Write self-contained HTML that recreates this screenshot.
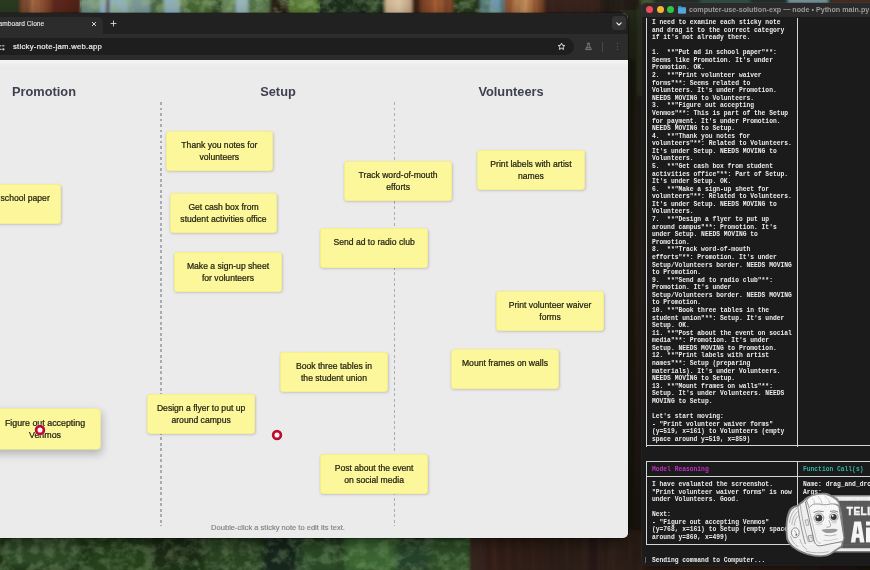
<!DOCTYPE html>
<html>
<head>
<meta charset="utf-8">
<title>Jamboard Clone</title>
<style>
*{box-sizing:border-box;margin:0;padding:0}
html,body{width:870px;height:570px;overflow:hidden}
body{position:relative;font-family:"Liberation Sans",sans-serif;background:#1f2a18}
.abs{position:absolute}
.ic{position:absolute;display:block;overflow:visible}
/* ---------- forest background ---------- */
#bg{position:absolute;left:0;top:0;width:870px;height:570px;overflow:hidden;background:#20301a}
#bg div{position:absolute}
/* ---------- browser ---------- */
#browser{position:absolute;border-radius:5.5px;overflow:hidden;background:#ebebeb;box-shadow:0 5px 16px rgba(0,0,0,.5),0 0 0 0.5px rgba(0,0,0,.5)}
#tabbar{position:absolute;left:0;top:0;width:100%;background:#212121}
#tab{position:absolute;left:0;top:3.6px;width:183.1px;bottom:0;background:#2c2c2c;border-radius:4.5px 4.5px 0 0}
.tabtxt{position:absolute;-webkit-text-stroke:.12px #e2e2e2;left:60px;top:5.8px;width:64.3px;text-align:right;font-size:6.6px;line-height:10px;color:#e2e2e2;white-space:nowrap;letter-spacing:.05px}
#ddbtn{position:absolute;width:14px;height:14px;border-radius:3.5px;background:#333}
#toolbar{position:absolute;left:0;width:100%;background:#2c2c2c}
#url{position:absolute;left:0;background:#1e1e1e;border-radius:8.6px}
.urltxt{position:absolute;-webkit-text-stroke:.2px #ededed;font-size:7.7px;line-height:10px;color:#ededed;white-space:nowrap;letter-spacing:.27px}
.dot{width:1.4px;height:1.4px;border-radius:50%;background:#6f6f6f}
#page{position:absolute;left:0;width:100%;background:linear-gradient(#f4f4f4 0,#ebebeb 7px)}
h2{position:absolute;width:120px;text-align:center;font-size:12.8px;line-height:16px;font-weight:bold;color:#3e4050}
.dash{position:absolute;width:1.1px;background:repeating-linear-gradient(to bottom,#aaaab3 0,#aaaab3 2.7px,transparent 2.7px,transparent 5.5px)}
.note{position:absolute;width:108px;height:39.7px;-webkit-text-stroke:0.22px #1d1d10;background:#fcf79b;border-radius:4px;box-shadow:inset 0 0 0 .6px #efe77f,0.3px 1px 2.5px rgba(0,0,0,.17);padding:7.6px 2px 0;text-align:center;font-size:8.6px;line-height:12.4px;color:#1d1d10;white-space:nowrap}
.note.drag{transform:scale(1.03);box-shadow:inset 0 0 0 .6px #efe77f,1px 4px 8px rgba(0,0,0,.24)}
#hint{position:absolute;width:200px;text-align:center;font-size:7.55px;line-height:10px;color:#808080;-webkit-text-stroke:.15px #808080}
.ring{position:absolute;width:10.8px;height:10.8px;border-radius:50%;border:3.1px solid #bb0b2b;background:#fff3f3;box-shadow:0 0 0 .7px rgba(255,255,255,.75)}
/* ---------- terminal ---------- */
#term{position:absolute;border-radius:5px;background:#1b1b1b;overflow:hidden;box-shadow:0 4px 14px rgba(0,0,0,.55),0 0 0 0.5px rgba(90,90,90,.6)}
#ttitle{position:absolute;left:0;top:0;width:100%;height:13.6px;background:#2a2a2a}
.tl{position:absolute;top:3.1px;width:7.2px;height:7.2px;border-radius:50%}
.ttxt{position:absolute;top:1.8px;font-size:7.17px;line-height:10px;font-weight:bold;color:#9b9b9b;white-space:nowrap}
pre{position:absolute;font-family:"Liberation Mono",monospace;font-weight:bold;font-size:6.3px;line-height:7.577px;color:#ececec;white-space:pre}
.ln{position:absolute}
.note,h2,#hint,pre,.tabtxt,.urltxt,.ttxt{will-change:transform}

#browser{left:-80.0px;top:13.0px;width:708.0px;height:524.5px}
#tabbar{height:21.2px}
#toolbar{top:21.2px;height:25.9px}
#page{top:46.599999999999994px;height:477.9px}
#term{left:642.4px;top:3.0px;width:237.60000000000002px;height:562.3px}
</style>
</head>
<body>
<div id="bg">
<svg class="ic" style="left:0;top:0" width="870" height="570" viewBox="0 0 870 570">
  <defs>
    <filter id="fz" x="-5%" y="-5%" width="110%" height="110%"><feGaussianBlur stdDeviation="1.6"/></filter>
    <filter id="fz2" x="-5%" y="-20%" width="110%" height="140%"><feGaussianBlur stdDeviation="3"/></filter>
    <linearGradient id="tr1" x1="0" x2="1"><stop offset="0" stop-color="#6e3e28"/><stop offset=".22" stop-color="#a86a44"/><stop offset=".42" stop-color="#8a4a2e"/><stop offset=".55" stop-color="#62291b"/><stop offset="1" stop-color="#4e2016"/></linearGradient>
    <linearGradient id="tr2" x1="0" x2="1"><stop offset="0" stop-color="#c9b08c"/><stop offset=".5" stop-color="#dcc6a4"/><stop offset="1" stop-color="#b89a78"/></linearGradient>
    <linearGradient id="tr3" x1="0" x2="1"><stop offset="0" stop-color="#7a3e22"/><stop offset=".5" stop-color="#a86036"/><stop offset="1" stop-color="#7a4024"/></linearGradient>
    <linearGradient id="tr4" x1="0" x2="1"><stop offset="0" stop-color="#8a4a28"/><stop offset=".45" stop-color="#cf9a62"/><stop offset=".75" stop-color="#a05c34"/><stop offset="1" stop-color="#4a2a1a"/></linearGradient>
    <linearGradient id="bt" x1="0" x2="1"><stop offset="0" stop-color="#33201a"/><stop offset=".3" stop-color="#281914"/><stop offset=".6" stop-color="#34221a"/><stop offset="1" stop-color="#1c1410"/></linearGradient>
    <linearGradient id="vs" x1="0" x2="0" y1="0" y2="1"><stop offset="0" stop-color="#252c1b"/><stop offset=".12" stop-color="#221f16"/><stop offset=".5" stop-color="#2e2119"/><stop offset="1" stop-color="#1c1511"/></linearGradient>
  <filter id="leaf" x="0" y="0" width="100%" height="100%"><feTurbulence type="fractalNoise" baseFrequency="0.09 0.11" numOctaves="3" seed="7"/><feColorMatrix values="0 0 0 0 0.30  0 0 0 0 0.46  0 0 0 0 0.22  2.4 2.4 0 0 -2.1"/></filter>
    <filter id="bark" x="0" y="0" width="100%" height="100%"><feTurbulence type="fractalNoise" baseFrequency="0.16 0.012" numOctaves="2" seed="3"/><feColorMatrix values="0 0 0 0 0.05  0 0 0 0 0.03  0 0 0 0 0.02  2.2 0 0 0 -0.8"/></filter>
  </defs>
  <rect width="870" height="570" fill="#22301c"/>
  <!-- top strip -->
  <g filter="url(#fz)">
    <rect x="-5" y="-5" width="26" height="26" fill="#2a3a24"/>
    <rect x="20" y="-5" width="62" height="26" fill="url(#tr1)"/>
    <rect x="81" y="-5" width="22" height="26" fill="#6f8f86"/>
    <rect x="100" y="-5" width="62" height="26" fill="#92b3c6"/>
    <rect x="106" y="-5" width="3.500" height="26" fill="#5a5040"/>
    <rect x="128" y="-5" width="22" height="26" fill="#7a9a9a"/>
    <rect x="150" y="-5" width="14" height="26" fill="#4f6a44"/>
    <rect x="164" y="-5" width="18" height="26" fill="#8fb0c0"/>
    <rect x="180" y="-5" width="34" height="26" fill="#4a6836"/>
    <rect x="212" y="-5" width="12" height="26" fill="#32482a"/>
    <rect x="222" y="-5" width="24" height="26" fill="#6a8a5a"/>
    <rect x="236" y="-5" width="14" height="26" fill="#9ab6c4"/>
    <rect x="248" y="-5" width="24" height="26" fill="#55754a"/>
    <rect x="270" y="-5" width="20" height="26" fill="#2c2218"/>
    <rect x="289" y="-5" width="32" height="26" fill="#587a30"/>
    <rect x="318" y="-5" width="68" height="26" fill="#1f2f1b"/>
    <rect x="368" y="-5" width="10" height="26" fill="#33482c"/>
    <rect x="385" y="-5" width="28" height="26" fill="url(#tr2)"/>
    <rect x="412" y="-5" width="9" height="26" fill="#3a2418"/>
    <rect x="420" y="-5" width="34" height="26" fill="url(#tr3)"/>
    <rect x="453" y="-5" width="30" height="26" fill="#27381f"/>
    <rect x="480" y="-5" width="26" height="26" fill="#557a78"/>
    <rect x="490" y="-5" width="10" height="26" fill="#7298b0"/>
    <rect x="505" y="-5" width="42" height="26" fill="url(#tr4)"/>
    <rect x="545" y="-5" width="56" height="26" fill="#38241a"/>
    <rect x="600" y="-5" width="45" height="26" fill="#231a14"/>
    <rect x="640" y="-5" width="240" height="12" fill="#25332a"/>
    <rect x="641" y="-5" width="12" height="10" fill="#4a5a30"/>
    <rect x="700" y="-5" width="50" height="10" fill="#33524c"/>
    <rect x="788" y="-5" width="40" height="10" fill="#7d9aa4"/>
    <rect x="832" y="-5" width="45" height="10" fill="#4a3024"/>
  </g>
  <!-- strip between windows -->
  <rect x="620" y="10" width="30" height="560" fill="url(#vs)"/>
  <rect x="626" y="60" width="9" height="510" fill="#17120e" opacity=".75" filter="url(#fz)"/>
  <rect x="637" y="6" width="6" height="90" fill="#39452a" opacity=".6" filter="url(#fz)"/>
  <!-- bottom strip -->
  <g filter="url(#fz2)">
    <rect x="-10" y="528" width="490" height="52" fill="#1f3019"/>
    <rect x="5" y="536" width="75" height="30" fill="#2f4a25"/>
    <rect x="90" y="542" width="60" height="40" fill="#27401f"/>
    <rect x="150" y="534" width="50" height="30" fill="#1a2a16"/>
    <rect x="205" y="538" width="55" height="40" fill="#294322"/>
    <rect x="262" y="534" width="45" height="40" fill="#18261a"/>
    <rect x="300" y="542" width="40" height="30" fill="#2c4a28"/>
    <rect x="345" y="536" width="50" height="36" fill="#3a6530"/>
    <rect x="395" y="542" width="40" height="30" fill="#27432a"/>
    <rect x="430" y="536" width="42" height="40" fill="#2e4e28"/>
  </g>
  <rect x="0" y="534" width="474" height="36" filter="url(#leaf)" opacity=".3"/>
  <rect x="80" y="0" width="240" height="14" filter="url(#leaf)" opacity=".5"/>
  <rect x="318" y="0" width="68" height="14" filter="url(#leaf)" opacity=".35"/>
  <rect x="453" y="0" width="52" height="14" filter="url(#leaf)" opacity=".4"/>
  <rect x="470" y="530" width="410" height="45" fill="url(#bt)" filter="url(#fz)"/>
  <rect x="470" y="534" width="175" height="36" filter="url(#bark)" opacity=".35"/>
  <rect x="20" y="0" width="62" height="14" filter="url(#bark)" opacity=".3"/>
  <rect x="420" y="0" width="34" height="14" filter="url(#bark)" opacity=".3"/>
  <rect x="505" y="0" width="140" height="14" filter="url(#bark)" opacity=".3"/>
</svg>

</div>

<div id="browser">
  <div id="tabbar">
    <div id="tab"></div>
    <div class="tabtxt">Jamboard Clone</div>
    <svg class="ic" style="left:171.1px;top:7.5px" width="6" height="6" viewBox="0 0 6 6"><path d="M1 1L5 5M5 1L1 5" stroke="#e6e6e6" stroke-width="0.9" fill="none"/></svg>
    <svg class="ic" style="left:189.9px;top:7.0px" width="7" height="7" viewBox="0 0 7 7"><path d="M3.5 0.6V6.4M0.6 3.5H6.4" stroke="#d8d8d8" stroke-width="0.9" fill="none"/></svg>
    <div id="ddbtn" style="left:691.6px;top:3.3999999999999986px"></div>
    <svg class="ic" style="left:695.6px;top:8.600000000000001px" width="6" height="4" viewBox="0 0 6 4"><path d="M0.8 0.8L3 3L5.2 0.8" stroke="#f0f0f0" stroke-width="1.1" fill="none" stroke-linecap="round" stroke-linejoin="round"/></svg>
  </div>
  <div id="toolbar">
    <div id="url" style="width:653.9px;top:3.900000000000002px;height:17.299999999999997px"></div>
    <svg class="ic" style="left:80.0px;top:9.400000000000002px" width="6" height="7" viewBox="0 0 6 7"><g fill="#d4d4d4"><rect x="0" y="1.300" width="1.300" height="1"/><rect x="2.100" y="1.300" width="2.400" height="1"/><rect x="0" y="4.800" width="1.700" height="1"/><circle cx="3.400" cy="5.300" r="1.150"/></g></svg>
    <div class="urltxt" style="left:92.6px;top:7.900000000000002px">sticky-note-jam.web.app</div>
    <svg class="ic" style="left:636.5px;top:8.099999999999998px" width="9" height="9" viewBox="0 0 24 24"><path d="M12 3.2l2.7 5.6 6.1.8-4.5 4.2 1.1 6-5.4-3-5.4 3 1.1-6L3.2 9.600l6.100-.8z" stroke="#e4e4e4" stroke-width="2.6" fill="none" stroke-linejoin="round"/></svg>
    <svg class="ic" style="left:663.8px;top:7.900000000000002px" width="9" height="9" viewBox="0 0 18 18"><path d="M6.500 2.5H11.500M7.500 2.500V7L3.200 15.200H14.800L10.500 7V2.500M5.200 11.500H12.800" stroke="#8d8d8d" stroke-width="1.6" fill="none" stroke-linejoin="round"/></svg>
    <div class="abs" style="left:682.3px;top:8.000000000000004px;width:0.8px;height:9.4px;background:#484848"></div>
    <div class="abs dot" style="left:696.9px;top:8.899999999999995px"></div>
    <div class="abs dot" style="left:696.9px;top:11.899999999999995px"></div>
    <div class="abs dot" style="left:696.9px;top:14.899999999999995px"></div>
  </div>
  <div id="page">
    <h2 style="left:64.4px;top:24.0px">Promotion</h2>
    <h2 style="left:298.0px;top:24.0px">Setup</h2>
    <h2 style="left:531.3px;top:24.0px">Volunteers</h2>
    <div class="dash" style="left:240.45px;top:42.8px;height:424.1px"></div>
    <div class="dash" style="left:474.05px;top:42.8px;height:424.1px"></div>
    <div class="note" style="left:245.8px;top:71.2px;width:106.7px">Thank you notes for<br>volunteers</div>
    <div class="note" style="left:249.8px;top:133.9px;width:107.0px">Get cash box from<br>student activities office</div>
    <div class="note" style="left:254.2px;top:192.2px;width:108.0px">Make a sign-up sheet<br>for volunteers</div>
    <div class="note" style="left:424.2px;top:101.9px;width:108.2px">Track word-of-mouth<br>efforts</div>
    <div class="note" style="left:400.2px;top:168.7px;width:108.2px">Send ad to radio club</div>
    <div class="note" style="left:556.6px;top:90.1px;width:107.9px">Print labels with artist<br>names</div>
    <div class="note" style="left:576.2px;top:231.2px;width:108.0px">Print volunteer waiver<br>forms</div>
    <div class="note" style="left:530.6px;top:289.2px;width:107.9px">Mount frames on walls</div>
    <div class="note" style="left:226.6px;top:334.6px;width:108.2px">Design a flyer to put up<br>around campus</div>
    <div class="note" style="left:359.6px;top:292.2px;width:107.9px">Book three tables in<br>the student union</div>
    <div class="note" style="left:399.6px;top:394.6px;width:108.2px">Post about the event<br>on social media</div>
    <div class="note" style="left:33.1px;top:124.7px;width:108.0px">Put ad in school paper</div>
    <div class="note drag" style="left:71.3px;top:349.7px">Figure out accepting<br>Venmos</div>
    <svg class="ic" style="left:113.2px;top:363.0px" width="14" height="14" viewBox="0 0 14 14"><circle cx="7" cy="7" r="5.700" fill="rgba(255,255,255,.6)"/><circle cx="7" cy="7" r="3.900" fill="#fff1f1" stroke="#b90b2b" stroke-width="2.700"/></svg>
    <svg class="ic" style="left:349.8px;top:368.5px" width="14" height="14" viewBox="0 0 14 14"><circle cx="7" cy="7" r="5.700" fill="rgba(255,255,255,.6)"/><circle cx="7" cy="7" r="3.900" fill="#fff1f1" stroke="#b90b2b" stroke-width="2.700"/></svg>
    <div id="hint" style="left:258.0px;top:463.0px">Double-click a sticky note to edit its text.</div>
  </div>
</div>

<div id="term">
  <div id="ttitle">
    <div class="tl" style="left:3.5px;background:#ed4a5a"></div>
    <div class="tl" style="left:14.200000000000045px;background:#f3b533"></div>
    <div class="tl" style="left:24.899999999999977px;background:#2dc840"></div>
    <svg class="ic" style="left:36.0px;top:2.9000000000000004px" width="8" height="7.400" viewBox="0 0 8 7.400"><path d="M0 0.800Q0 0 0.800 0H3L3.800 0.900H7.200Q8 0.900 8 1.700V6.600Q8 7.400 7.200 7.400H0.800Q0 7.400 0 6.600Z" fill="#3d8cc4"/><path d="M0 2.300H8V6.600Q8 7.400 7.200 7.400H0.800Q0 7.400 0 6.600Z" fill="#55a7dc"/></svg>
    <div class="ttxt" style="left:46.80000000000007px">computer-use-solution-exp — node • Python main.py</div>
  </div>
  <pre style="left:9.8px;top:16.31px">I need to examine each sticky note
and drag it to the correct category
if it's not already there.

1.  **"Put ad in school paper"**:
Seems like Promotion. It's under
Promotion. OK.
2.  **"Print volunteer waiver
forms"**: Seems related to
Volunteers. It's under Promotion.
NEEDS MOVING to Volunteers.
3.  **"Figure out accepting
Venmos"**: This is part of the Setup
for payment. It's under Promotion.
NEEDS MOVING to Setup.
4.  **"Thank you notes for
volunteers"**: Related to Volunteers.
It's under Setup. NEEDS MOVING to
Volunteers.
5.  **"Get cash box from student
activities office"**: Part of Setup.
It's under Setup. OK.
6.  **"Make a sign-up sheet for
volunteers"**: Related to Volunteers.
It's under Setup. NEEDS MOVING to
Volunteers.
7.  **"Design a flyer to put up
around campus"**: Promotion. It's
under Setup. NEEDS MOVING to
Promotion.
8.  **"Track word-of-mouth
efforts"**: Promotion. It's under
Setup/Volunteers border. NEEDS MOVING
to Promotion.
9.  **"Send ad to radio club"**:
Promotion. It's under
Setup/Volunteers border. NEEDS MOVING
to Promotion.
10. **"Book three tables in the
student union"**: Setup. It's under
Setup. OK.
11. **"Post about the event on social
media"**: Promotion. It's under
Setup. NEEDS MOVING to Promotion.
12. **"Print labels with artist
names"**: Setup (preparing
materials). It's under Volunteers.
NEEDS MOVING to Setup.
13. **"Mount frames on walls"**:
Setup. It's under Volunteers. NEEDS
MOVING to Setup.

Let's start moving:
- "Print volunteer waiver forms"
(y=519, x=161) to Volunteers (empty
space around y=519, x=859)</pre>
  <pre style="left:9.8px;top:463.11px;color:#c22fc4">Model Reasoning</pre>
  <pre style="left:160.8px;top:463.11px;color:#2fb5a4">Function Call(s)</pre>
  <pre style="left:9.8px;top:478.21px">I have evaluated the screenshot.
"Print volunteer waiver forms" is now
under Volunteers. Good.

Next:
- "Figure out accepting Venmos"
(y=768, x=161) to Setup (empty space
around y=860, x=499)</pre>
  <pre style="left:160.8px;top:478.21px">Name: drag_and_drop
Args:
  destination_y: 860
  destination_x: 499
  x: 161
  y: 768</pre>
  <pre style="left:9.8px;top:554.01px">Sending command to Computer...</pre>
  <div class="ln" style="left:3.6px;top:14.5px;width:0.9px;height:429.2px;background:#d6d6d6"></div>
  <div class="ln" style="left:154.6px;top:14.5px;width:0.9px;height:429.2px;background:#d6d6d6"></div>
  <div class="ln" style="left:3.6px;top:442.3px;width:240.0px;height:0.9px;background:#d6d6d6"></div>
  <div class="ln" style="left:3.6px;top:458.3px;width:240.0px;height:0.9px;background:#d6d6d6"></div>
  <div class="ln" style="left:3.6px;top:473.4px;width:240.0px;height:0.9px;background:#d6d6d6"></div>
  <div class="ln" style="left:3.6px;top:541.1px;width:240.0px;height:0.9px;background:#d6d6d6"></div>
  <div class="ln" style="left:3.6px;top:458.3px;width:0.9px;height:83.6px;background:#d6d6d6"></div>
  <div class="ln" style="left:154.6px;top:458.3px;width:0.9px;height:83.6px;background:#d6d6d6"></div>
  <div class="ln" style="left:2.9px;top:553.5px;width:0.8px;height:6.4px;background:#666"></div>
</div>
<svg id="logo" class="ic" style="left:780px;top:488px;opacity:.96" width="90" height="72" viewBox="780 488 90 72">
  <!-- banner -->
  <path d="M832 495H872V552.500H829Z" fill="#858585"/>
  <path d="M834 496.500H872V551.100H830Z" fill="#f4f4f4"/>
  <path d="M834 500.700H872V548.300H830Z" fill="#5c5c5c"/>
  <g transform="translate(0,0.7)">
  <!-- head outline -->
  <path d="M785.600 526C785.800 519 787 512.500 789.500 508.500C791.500 505.500 794.500 504.800 797.200 504.200C799.500 502.500 801 501 802.800 499.800C804.500 498 806 496.800 807.500 495.900C812 493.500 817 492.400 821 492.200C824 491.800 827 491.900 830 493.500C833 495 836 496.500 838.500 498.500L842 512L844.500 536L842.500 546L834 551.500C831.500 554 828 555.600 824 555.900C820 556.300 816 556.300 812 555.300C808 554.700 805 553.600 802 552.300C798 550.500 794.500 548.500 791.500 546C789 543.500 787 541 786.200 538C785.700 534 785.500 530 785.600 526Z" fill="#868686"/>
  <path d="M787.400 526C787.600 519.500 788.700 514 791 510.200C792.800 507.400 795.500 506.600 798 506C800.300 504.400 801.800 502.800 803.800 501.300C805.500 499.600 807 498.500 808.500 497.600C812.500 495.300 817 494.200 821 494C824 493.700 826.500 493.800 829.300 495.200C832 496.500 834.800 498 837 499.800L840.300 512.500L842.700 536L841 545L833 550.200C830.500 552.500 827.500 554 824 554.200C820 554.600 816.500 554.600 812.500 553.700C808.500 553 805.500 552 802.800 550.800C799 549 795.500 547.200 792.800 544.800C790.500 542.500 788.800 540.200 788 537.500C787.500 534 787.300 530 787.400 526Z" fill="#f7f7f7"/>
  <!-- back-of-head hair strands -->
  <g stroke="#a9a9a9" stroke-width=".75" fill="none">
    <path d="M797 507.500C793 510 790.500 515 789.500 522"/>
    <path d="M798 510.500C794.500 513.500 792.500 518 791.800 524"/>
    <path d="M798.800 514.500C796 517 794.600 520.500 794.200 525"/>
    <path d="M790.500 535.500C791.500 540 794 543.500 798 546"/>
    <path d="M800 538.500C801 543 803.500 546.500 807 549"/>
    <path d="M806 550.500Q816 553.500 829 551"/>
  </g>
  <!-- strap -->
  <path d="M797.800 505.500C799 516 801.500 530 805.400 543.500" stroke="#8e8e8e" stroke-width=".9" fill="none"/>
  <path d="M800.300 504.500C801.500 515 804.500 529 808.500 541.500" stroke="#a2a2a2" stroke-width=".8" fill="none"/>
  <!-- face plate -->
  <path d="M805.400 501.300C812 498 826 498 838.800 505.500L843.900 537C844 539.500 842.500 541 841.300 541L821.200 545C817.500 545.600 815.500 544 814.300 541Z" fill="#fcfcfc" stroke="#858585" stroke-width="1"/>
  <path d="M808.700 507L816.500 539.500C817.300 541.800 818.800 542.600 821 542.300" stroke="#b4b4b4" stroke-width=".7" fill="none"/>
  <!-- hair -->
  <path d="M806.600 500C808 497 810.500 495.500 813.500 494.800C817 493.600 820.500 493.400 823.700 493.600C828 494 832 496 835 498.500C837.500 500.500 839 502.500 839.500 504.400C836.500 503.300 833.500 503 830.500 503.300C827.500 504 825 504.200 822.500 504C819.500 503.200 816.500 503 813.500 503.600C811.500 504.400 810 505.800 809.200 507Z" fill="#ffffff" stroke="#8e8e8e" stroke-width=".85"/>
  <path d="M812 497.500Q815 500 814.500 503.300M818 495.500Q821.500 499 822.300 503.800M825 495.500Q829 499 830.800 503.200" stroke="#b2b2b2" stroke-width=".65" fill="none"/>
  <!-- eyes -->
  <ellipse cx="818.900" cy="517.300" rx="4.900" ry="5" fill="#fff" stroke="#8e8e8e" stroke-width=".8"/>
  <circle cx="818.800" cy="517.400" r="3.500" fill="#3a3a3a"/>
  <circle cx="817.600" cy="516.100" r="1.100" fill="#fff"/>
  <ellipse cx="833.800" cy="516.100" rx="4.200" ry="4.400" fill="#fff" stroke="#8e8e8e" stroke-width=".8"/>
  <circle cx="833.700" cy="516.200" r="3" fill="#3a3a3a"/>
  <circle cx="832.700" cy="515.100" r="1" fill="#fff"/>
  <path d="M813.500 511.800Q818.500 509.300 823.800 511M830 510.800Q834 509.200 838 511.300" stroke="#808080" stroke-width=".9" fill="none"/>
  <path d="M815.500 523.500Q819 525 822.500 523.300M831.300 522Q834.300 523 837 521.500" stroke="#b5b5b5" stroke-width=".6" fill="none"/>
  <!-- nose -->
  <path d="M829 519.500Q831 523.500 830.500 525.500Q829 527 826.500 526.300" stroke="#9a9a9a" stroke-width=".8" fill="none"/>
  <!-- mouth / moustache -->
  <path d="M821.500 529.300Q825 527.700 829.500 528.400Q834 527.500 837.800 528.800Q837 532 829.800 532.400Q823.500 532.600 821.500 529.300Z" fill="#9d9d9d"/>
  <path d="M824.500 534.600Q830.500 536 836.300 534" stroke="#a8a8a8" stroke-width=".8" fill="none"/>
  <path d="M823.500 539.800Q831 540.500 837.800 538" stroke="#bdbdbd" stroke-width=".6" fill="none"/>
  <!-- ear -->
  <ellipse cx="795.300" cy="532" rx="3.900" ry="4.900" fill="#fdfdfd" stroke="#8e8e8e" stroke-width=".95"/>
  <path d="M794 529.800Q797.200 531 796 534.500" stroke="#9a9a9a" stroke-width=".7" fill="none"/>
  <circle cx="796.400" cy="534" r="1" fill="#707070"/>
  <!-- jaw hardware -->
  <path d="M808 535.300L812.600 534.300L813.600 540L809.600 541Z" fill="#f4f4f4" stroke="#858585" stroke-width=".8"/>
  <path d="M810 536.600L811.800 536.300L812.200 538.800" stroke="#8a8a8a" stroke-width=".6" fill="none"/>
  <path d="M805.200 519.500L807.800 518.900L808.900 524.300L806.500 524.900Z" fill="#f4f4f4" stroke="#909090" stroke-width=".65"/>
  </g>
  <!-- text -->
  <text x="846.800" y="515.300" font-family="Liberation Sans, sans-serif" font-weight="bold" font-size="10" fill="#fdfdfd" stroke="#fdfdfd" stroke-width=".5" letter-spacing=".5">TELL</text>
  <g fill="#fdfdfd">
    <path d="M850.800 542.400L854.300 521.500H861L864.500 542.400H859.900L859.300 537.800H856L855.400 542.400ZM856.500 533.800H858.800L857.650 525.500Z"/>
    <rect x="866" y="527.500" width="4.500" height="14.900"/>
    <rect x="866" y="521.500" width="4.500" height="4"/>
  </g>
</svg>

</body>
</html>
